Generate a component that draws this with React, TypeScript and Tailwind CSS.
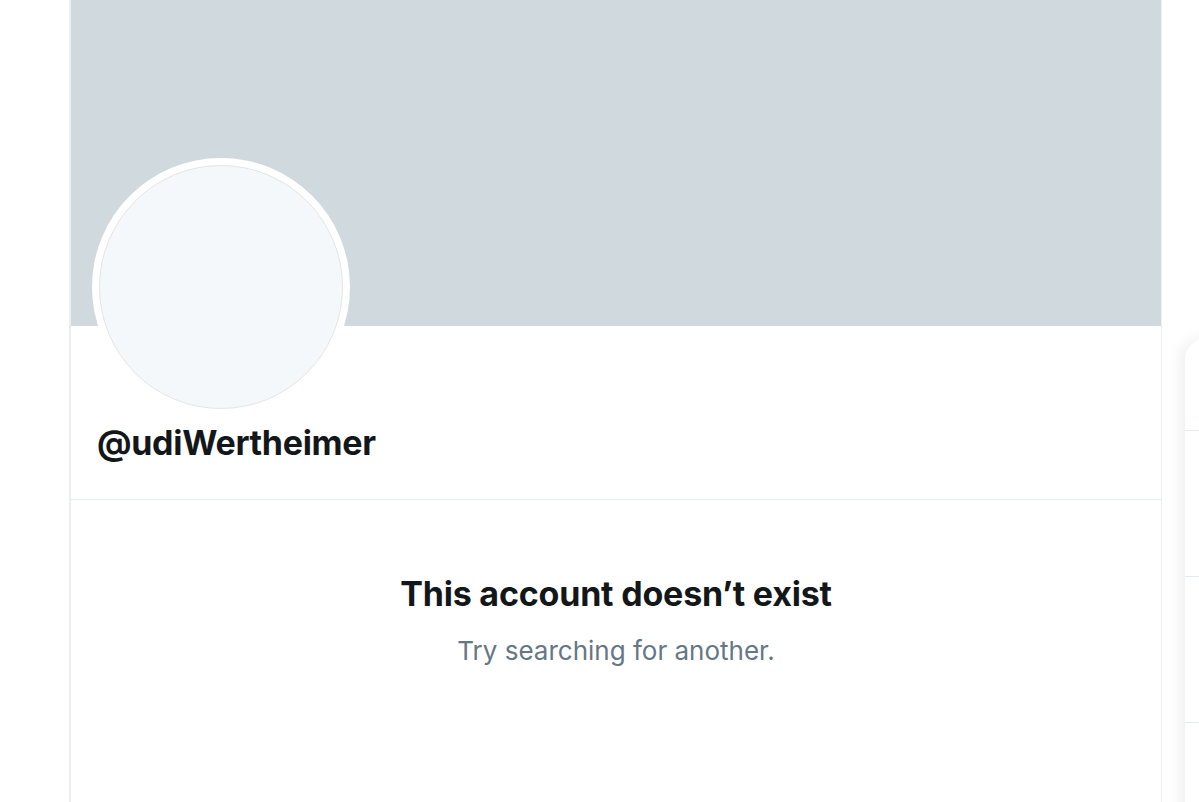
import React from "react";

export default function App() {
  return (
    <div
      className="w-[1199px] h-[802px] overflow-hidden bg-white flex"
      style={{ fontFamily: "Inter, 'Noto Sans', sans-serif" }}
    >
      <div className="w-[69px] shrink-0" />
      <main className="w-[1093px] shrink-0 border-l-2 border-r border-[#eceff1] flex flex-col">
        <div className="h-[326px] bg-[#cfd9de]" />
        <div className="pl-[21px] -mt-[168px]">
          <div className="w-[258px] h-[258px] rounded-full bg-white p-[7px]">
            <div className="w-full h-full rounded-full bg-[#f5f8fa] border border-[#e3e6e8]" />
          </div>
        </div>
        <div className="pl-[26px] pt-[6px] h-[84px] border-b border-[#e6ecf0]">
          <div className="text-[34px] leading-[42px] font-bold text-[#14171a] tracking-[-0.3px]">
            @udiWertheimer
          </div>
        </div>
        <div className="flex flex-col items-center pt-[74px]">
          <div className="text-[34px] leading-[40px] font-bold text-[#14171a] tracking-[-0.2px]">
            This account doesn’t exist
          </div>
          <div className="mt-[21px] text-[26px] leading-[32px] text-[#657786]">
            Try searching for another.
          </div>
        </div>
      </main>
      <div className="w-[23px] shrink-0" />
      <aside className="flex-1 pt-[338px]">
        <div className="h-[600px] w-[200px] bg-white rounded-tl-[22px] shadow-[-6px_0_14px_rgba(0,0,0,0.06)]">
          <div className="h-[93px] border-b border-[#e6ecf0]" />
          <div className="h-[146px] border-b border-[#e6ecf0]" />
          <div className="h-[146px] border-b border-[#e6ecf0]" />
        </div>
      </aside>
    </div>
  );
}
